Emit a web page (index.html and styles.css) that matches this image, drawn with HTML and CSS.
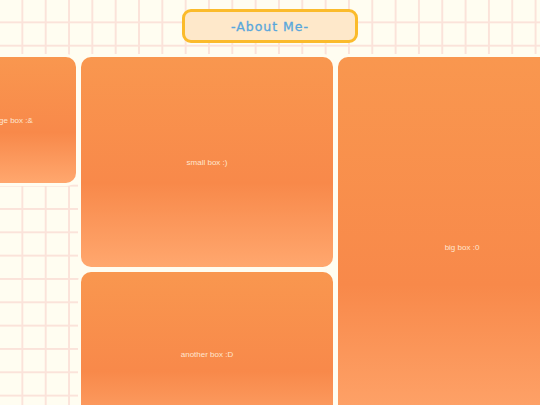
FILE: index.html
```html
<!DOCTYPE html>
<html lang="en">
<head>
    <meta charset="UTF-8">
    <meta name="viewport" content="width=device-width, initial-scale=1.0">
    <title>About Me</title>
    <link rel="stylesheet" href="styles.css">
</head>
<body>
    <!-- Title -->
    <header class="top">
        <h1 class="title">-About Me-</h1>
    </header>

    <!-- Boxes -->
    <main class="boxes">
        <div class="box box-image">image box :&amp;</div>
        <div class="box box-small">small box :)</div>
        <div class="box box-big">big box :0</div>
        <div class="box box-another">another box :D</div>
    </main>
</body>
</html>
```

FILE: styles.css
```css
/* Global Styles */
html, body {
    overflow: hidden;
}

body {
    margin: 0;
    min-height: 100vh;
    font-family: 'Liberation Sans', Arial, sans-serif;
    background-color: #fffdf1;
    background-image:
        linear-gradient(to right, transparent 21.5px, #fbe3da 21.5px),
        linear-gradient(to bottom, transparent 21.5px, #fbe3da 21.5px);
    background-size: 23.333px 23.333px;
}

/* Title */
.top {
    display: flex;
    justify-content: center;
    padding-top: 9px;
}

.title {
    margin: 0;
    width: 176px;
    height: 34px;
    box-sizing: border-box;
    display: flex;
    align-items: center;
    justify-content: center;
    border: 3px solid #fbbb2b;
    border-radius: 9px;
    background-color: #fee8ca;
    color: #58a7dc;
    font-family: 'DejaVu Sans', sans-serif;
    font-size: 12.5px;
    font-weight: normal;
    letter-spacing: 1px;
    -webkit-text-stroke: 0.3px #58a7dc;
}

/* Box grid */
.boxes {
    display: grid;
    grid-template-columns: 133px 252px 248px;
    grid-template-rows: 126px 79px 165px;
    grid-template-areas:
        "image small big"
        ". small big"
        ". another big";
    gap: 5px;
    margin-top: 14px;
    margin-left: -57px;
}

.box {
    display: flex;
    align-items: center;
    justify-content: center;
    border-radius: 10px;
    background: linear-gradient(180deg, #f9974f 0%, #f8894a 60%, #ffa76e 100%);
    box-shadow: 0 0 0 3px #fffdf1;
    color: #ffe6d0;
    font-size: 8px;
}

.box-image {
    grid-area: image;
}

.box-small {
    grid-area: small;
}

.box-big {
    grid-area: big;
}

.box-another {
    grid-area: another;
}
```
